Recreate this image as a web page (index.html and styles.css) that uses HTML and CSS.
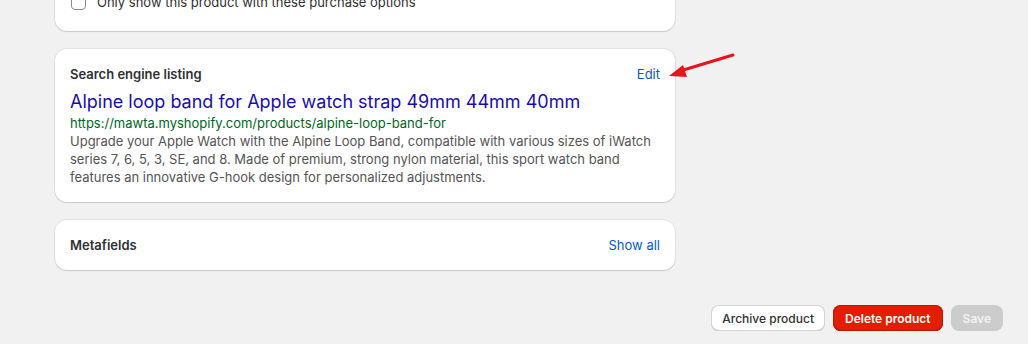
FILE: index.html
```html
<!DOCTYPE html>
<html lang="en">
<head>
    <meta charset="UTF-8">
    <meta name="viewport" content="width=device-width, initial-scale=1.0">
    <title>Product</title>
    <link rel="stylesheet" href="styles.css">
</head>
<body>
    <div class="page">
        <div class="column">
            <div class="card card-options">
                <label class="check-row">
                    <span class="checkbox"></span>
                    <span>Only show this product with these purchase options</span>
                </label>
            </div>

            <div class="card card-seo">
                <div class="card-header">
                    <h2>Search engine listing</h2>
                    <a href="#" class="link">Edit</a>
                </div>
                <div class="seo-title">Alpine loop band for Apple watch strap 49mm 44mm 40mm</div>
                <div class="seo-url">https://mawta.myshopify.com/products/alpine-loop-band-for</div>
                <p class="seo-desc">Upgrade your Apple Watch with the Alpine Loop Band, compatible with various sizes of iWatch series 7, 6, 5, 3, SE, and 8. Made of premium, strong nylon material, this sport watch band features an innovative G-hook design for personalized adjustments.</p>
            </div>

            <div class="card">
                <div class="card-header">
                    <h2>Metafields</h2>
                    <a href="#" class="link">Show all</a>
                </div>
            </div>
        </div>

        <div class="actions">
            <button class="btn">Archive product</button>
            <button class="btn btn-danger">Delete product</button>
            <button class="btn btn-disabled">Save</button>
        </div>
    </div>

    <!-- annotation arrow over the Edit link -->
    <svg class="arrow" width="80" height="40" viewBox="0 0 80 40">
        <line x1="77" y1="16" x2="24" y2="32" stroke="#e8141b" stroke-width="3" stroke-linecap="round"/>
        <polygon points="13,37 27,26 31,38" fill="#e8141b"/>
    </svg>
</body>
</html>
```

FILE: styles.css
```css
body {
    margin: 0;
    background-color: #f1f1f1;
    font-family: 'Inter', 'Liberation Sans', Arial, sans-serif;
    font-size: 13px;
    color: #303030;
    overflow: hidden;
}
.page {
    padding: 0 25px 0 55px;
}
.column {
    width: 620px;
    display: flex;
    flex-direction: column;
    gap: 18px;
    margin-top: -22px;
}
.card {
    background: white;
    border-radius: 12px;
    padding: 15px;
    box-shadow: 0 1px 1px rgba(26, 26, 26, 0.12), 0 0 0 1px rgba(0, 0, 0, 0.06);
}
.card-options {
    padding: 14px 15px 19px 16px;
}
.check-row {
    display: flex;
    align-items: center;
    gap: 11px;
    line-height: 20px;
}
.checkbox {
    width: 13px;
    height: 13px;
    border: 1px solid #8a8a8a;
    border-radius: 4px;
    background: white;
}
.card-header {
    display: flex;
    justify-content: space-between;
    align-items: center;
    line-height: 20px;
}
.card-header h2 {
    margin: 0;
    font-size: 13px;
    font-weight: 600;
    color: #303030;
}
.link {
    color: #005bd3;
    text-decoration: none;
}
.card-seo {
    padding-bottom: 16px;
}
.card-seo .card-header {
    margin-bottom: 6px;
}
.seo-title {
    font-size: 18px;
    line-height: 24px;
    color: #1a0dab;
}
.seo-url {
    line-height: 18px;
    color: #006621;
}
.seo-desc {
    margin: 0;
    line-height: 18px;
    color: #545454;
}
.actions {
    display: flex;
    justify-content: flex-end;
    gap: 8px;
    margin-top: 35px;
}
.btn {
    height: 26px;
    font-family: inherit;
    font-size: 12px;
    font-weight: 500;
    padding: 0 11px;
    border-radius: 8px;
    border: none;
    background: white;
    color: #303030;
    box-shadow: 0 1px 0 rgba(0, 0, 0, 0.08), 0 0 0 1px #d4d4d4 inset, 0 -1px 0 #b5b5b5 inset;
}
.btn-danger {
    background: #e51c00;
    color: white;
    font-weight: 600;
    padding: 0 12px;
    box-shadow: 0 0 0 1px #b51a00 inset, 0 -1px 0 #8e1f0b inset, 0 1px 1px rgba(0, 0, 0, 0.1);
}
.btn-disabled {
    background: #cccccc;
    color: #f3f3f3;
    font-weight: 600;
    padding: 0 12px;
    box-shadow: none;
}
.arrow {
    position: absolute;
    left: 656px;
    top: 39px;
}
```
